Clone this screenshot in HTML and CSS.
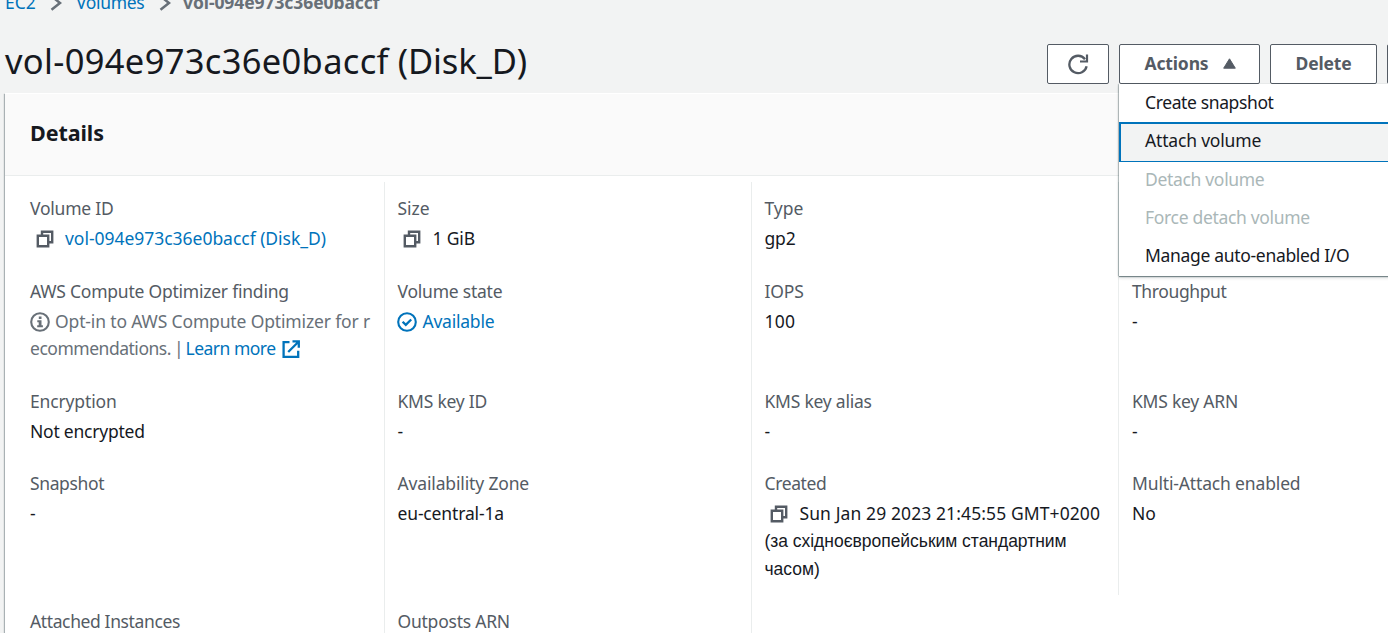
FILE: index.html
```html
<!DOCTYPE html>
<html lang="en">
<head>
<meta charset="utf-8">
<title>Volume details</title>
<link rel="stylesheet" href="styles.css">
</head>
<body>
<svg class="defs" width="0" height="0">
  <symbol id="copy" viewBox="0 0 18 18"><path d="M6 5.5V1.8h10.2v10.4h-3.6M1.8 5.7h10.4v10.5H1.8z" fill="none" stroke="currentColor" stroke-width="2.4"/></symbol>
</svg>
<nav class="crumbs">
  <a class="crumb-root">EC2</a>
  <svg class="chev" viewBox="0 0 12 16"><path d="M1.5 1.2L10 8l-8.500 6.800" fill="none" stroke="currentColor" stroke-width="2.5"/></svg>
  <a class="crumb-mid">Volumes</a>
  <svg class="chev" viewBox="0 0 12 16"><path d="M1.5 1.2L10 8l-8.500 6.800" fill="none" stroke="currentColor" stroke-width="2.5"/></svg>
  <span class="crumb-current">vol-094e973c36e0baccf</span>
</nav>
<header class="head">
  <h1><span class="vol">vol-094e973c36e0baccf</span> (Disk_D)</h1>
  <div class="buttons">
    <button class="btn refresh"><svg width="22" height="22" viewBox="0 0 22 22"><path d="M19.6 13.2A8.7 8.7 0 1 1 18 6.2" fill="none" stroke="currentColor" stroke-width="2.3"/><path d="M20 1.6v6.900h-7" fill="none" stroke="currentColor" stroke-width="2.2"/></svg></button>
    <div class="dropdown">
      <button class="btn actions">Actions<svg width="13" height="11" viewBox="0 0 13 11"><path d="M6.5.8L12.3 10.2H.7z" fill="currentColor" stroke="currentColor" stroke-linejoin="round"/></svg></button>
      <ul class="menu">
        <li class="tight">Create snapshot</li>
        <li class="active">Attach volume</li>
        <li class="disabled">Detach volume</li>
        <li class="disabled">Force detach volume</li>
        <li class="last">Manage auto-enabled I/O</li>
      </ul>
    </div>
    <button class="btn delete">Delete</button>
    <button class="btn next"></button>
  </div>
</header>
<main class="panel">
  <h2>Details</h2>
  <div class="grid">
    <div class="cell"><div class="label snug">Volume ID</div><div class="value"><svg class="copy"><use href="#copy"/></svg><a class="even">vol-094e973c36e0baccf (Disk_D)</a></div></div>
    <div class="cell"><div class="label even">Size</div><div class="value"><svg class="copy"><use href="#copy"/></svg>1 GiB</div></div>
    <div class="cell"><div class="label even">Type</div><div class="value">gp2</div></div>
    <div class="cell"></div>

    <div class="cell"><div class="label snug">AWS Compute Optimizer finding</div><div class="value muted"><svg class="info" width="20" height="20" viewBox="0 0 20 20"><circle cx="10" cy="10" r="8.8" fill="none" stroke="currentColor" stroke-width="2.1"/><path d="M8.8 4.5h2.7v2.4H8.8zM7.3 8.2h4.2v5h1.4v2H7.2v-2h1.5v-3H7.3z" fill="currentColor"/></svg>Opt-in to AWS Compute Optimizer for r<br><span class="tight rec">ecommendations.</span><span class="bar">|</span><a class="more">Learn more</a><a><svg class="ext" width="18" height="18" viewBox="0 0 18 18"><path d="M7.5 2.2H1.6v14.6h14.6v-6M10.5 1.400h6.300v6.300M16.5 1.7L6.2 12" fill="none" stroke="currentColor" stroke-width="2.3"/></svg></a></div></div>
    <div class="cell"><div class="label snug">Volume state</div><div class="value"><a class="snug"><svg class="info state" width="20" height="20" viewBox="0 0 20 20"><circle cx="10" cy="10" r="8.8" fill="none" stroke="currentColor" stroke-width="2.1"/><path d="M5.6 9.7l3.200 3.200 5.400-5.400" fill="none" stroke="currentColor" stroke-width="2.3"/></svg>Available</a></div></div>
    <div class="cell"><div class="label">IOPS</div><div class="value loose">100</div></div>
    <div class="cell"><div class="label tight">Throughput</div><div class="value">-</div></div>

    <div class="cell"><div class="label">Encryption</div><div class="value snug">Not encrypted</div></div>
    <div class="cell"><div class="label snug">KMS key ID</div><div class="value">-</div></div>
    <div class="cell"><div class="label snug">KMS key alias</div><div class="value">-</div></div>
    <div class="cell"><div class="label snug">KMS key ARN</div><div class="value">-</div></div>

    <div class="cell"><div class="label tight">Snapshot</div><div class="value">-</div></div>
    <div class="cell"><div class="label">Availability Zone</div><div class="value">eu-central-1a</div></div>
    <div class="cell"><div class="label tight">Created</div><div class="value"><svg class="copy"><use href="#copy"/></svg><span class="date">Sun Jan 29 2023 21:45:55 GMT+0200</span><div class="cyr">(за східноєвропейським стандартним<br>часом)</div></div></div>
    <div class="cell"><div class="label">Multi-Attach enabled</div><div class="value">No</div></div>

    <div class="cell"><div class="label tight">Attached Instances</div></div>
    <div class="cell"><div class="label snug">Outposts ARN</div></div>
    <div class="cell"></div>
  </div>
</main>
</body>
</html>
```
FILE: styles.css
```css
* { box-sizing: border-box; }
body {
  margin: 0;
  height: 633px;
  overflow: hidden;
  background: #f2f3f3;
  color: #16191f;
  font: 17.5px/27.5px "Noto Sans", sans-serif;
  letter-spacing: -0.15px;
}
.defs { position: absolute; }
a { color: #0073bb; }

.crumbs { display: flex; align-items: center; height: 28px; margin: -11px 0 0 5px; }
.crumb-root { width: 45px; letter-spacing: 0; }
.crumb-mid { width: 83px; margin-left: 14px; letter-spacing: -0.35px; }
.chev { flex: none; width: 12px; height: 16px; color: #687078; }
.crumb-current { margin-left: 12px; color: #687078; font-weight: 700; letter-spacing: -0.08px; }

.head { display: flex; justify-content: space-between; height: 76px; padding: 27px 0 0 5px; }
h1 { margin: -1px 0 0; font-size: 34.5px; font-weight: 400; line-height: 36px; letter-spacing: -0.1px; white-space: nowrap; }
.vol { letter-spacing: 0.32px; }
.buttons { display: flex; flex: none; width: 341px; gap: 10px; }
.btn {
  display: flex;
  flex: none;
  align-items: center;
  justify-content: center;
  height: 40px;
  padding: 0 0 2px;
  background: #fff;
  border: 1px solid #545b64;
  border-radius: 2px;
  color: #545b64;
  font: 700 17.5px/27px "Noto Sans", sans-serif;
  letter-spacing: -0.15px;
}
.refresh { width: 62px; padding-bottom: 1px; }
.actions { width: 141px; gap: 14px; padding-left: 1px; }
.delete { width: 107px; }
.next { width: 60px; }

.dropdown { position: relative; }
.menu {
  position: absolute;
  z-index: 2;
  top: 40px;
  left: 0;
  width: 300px;
  margin: 0;
  padding: 0;
  list-style: none;
  background: #fff;
  box-shadow: 0 1px 1px rgba(0, 28, 36, 0.45), -1px 0 1px rgba(0, 28, 36, 0.2), 0 2px 3px rgba(0, 28, 36, 0.15);
}
.menu li { height: 38.3px; padding-left: 26px; line-height: 36px; letter-spacing: -0.32px; }
.menu .active { height: 40px; margin: -0.3px 0 -1px; padding-left: 24px; background: #f2f3f3; border: 2px solid #0073bb; border-bottom-width: 1px; line-height: 33px; letter-spacing: -0.18px; }
.menu .disabled { color: #aab7b8; }
.menu .last { line-height: 35px; }

.panel { margin-left: 5px; height: 540px; background: #fff; border-top: 1px solid #fff; box-shadow: -1px 1px 1px rgba(0, 28, 36, 0.3); }
h2 { margin: 0; height: 82px; padding-left: 25px; background: #fafafa; border-bottom: 1px solid #eaeded; font-size: 21.5px; line-height: 78px; letter-spacing: -0.08px; }
.grid { display: grid; grid-template-columns: 379px 367px 367px 270px; grid-template-rows: 83px 110px 82px 138px 38px; padding-top: 6px; }
.cell { padding: 12.5px 0 0 12.5px; border-left: 1px solid #eaeded; white-space: nowrap; }
.cell:nth-child(4n + 1) { padding-left: 25px; border-left: 0; }
.cell:nth-child(4n) { padding-left: 13px; }
.label { color: #545b64; }
.value { margin-top: 2.5px; }
.muted { color: #687078; }
.copy { width: 18px; height: 18px; margin: 0 11.5px 0 5.500px; color: #545b64; vertical-align: -3.500px; }
.info { margin-right: 5px; vertical-align: -4px; }
.state { margin: 0 5.500px 0 -0.500px; }
.ext { margin-left: 6px; vertical-align: -3px; }
.even { letter-spacing: -0.03px; }
.loose { letter-spacing: 0.2px; }
.snug { letter-spacing: -0.23px; }
.tight, .menu .tight { letter-spacing: -0.38px; }
.rec { letter-spacing: -0.48px; }
.bar { margin-left: 3px; }
.more { margin-left: 2px; letter-spacing: -0.5px; }
.date { letter-spacing: 0.1px; }
.cyr { margin-top: 1.3px; font: 17.5px/27.3px "Liberation Sans", sans-serif; letter-spacing: -0.03px; }
```
